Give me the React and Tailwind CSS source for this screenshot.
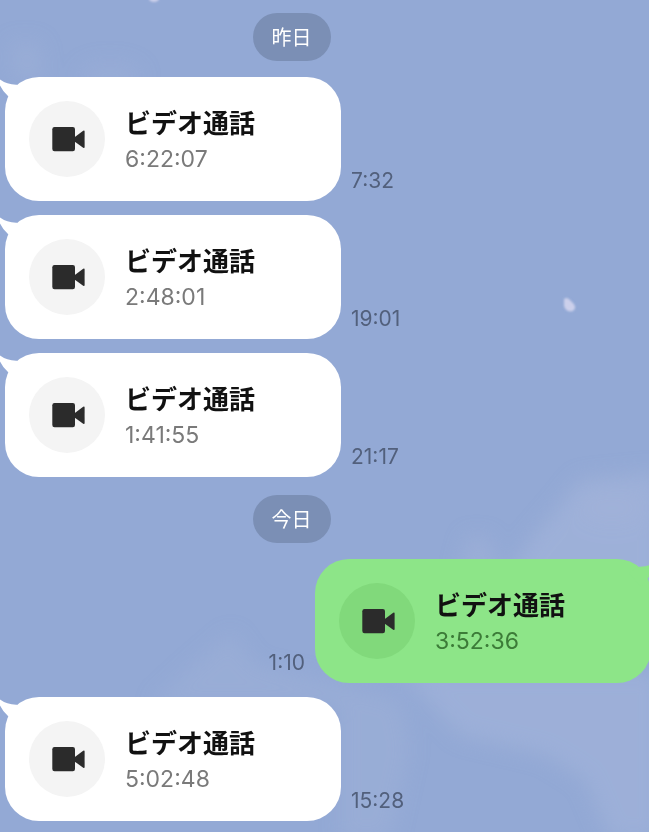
import React from 'react'
import clsx from 'clsx'

const DAYS = [
  {
    label: '昨日',
    calls: [
      { id: 1, duration: '6:22:07', time: '7:32' },
      { id: 2, duration: '2:48:01', time: '19:01' },
      { id: 3, duration: '1:41:55', time: '21:17' },
    ],
  },
  {
    label: '今日',
    calls: [
      { id: 4, duration: '3:52:36', time: '1:10', mine: true },
      { id: 5, duration: '5:02:48', time: '15:28' },
    ],
  },
]

function Wallpaper() {
  return (
    <svg
      className="absolute inset-0 h-full w-full"
      viewBox="0 0 649 832"
      preserveAspectRatio="xMidYMid slice"
      aria-hidden="true"
    >
      <defs>
        <filter id="cloud" x="-20%" y="-20%" width="140%" height="140%">
          <feGaussianBlur stdDeviation="10" />
        </filter>
        <filter id="petal" x="-50%" y="-50%" width="200%" height="200%">
          <feGaussianBlur stdDeviation="1.3" />
        </filter>
      </defs>
      <g fill="#a3b4da" filter="url(#cloud)">
        <path d="M505 580 L530 540 L560 505 L580 480 L660 472 V600 H505z" opacity=".65" />
        <ellipse cx="612" cy="508" rx="34" ry="16" opacity=".5" />
        <path d="M458 575 L468 536 L490 538 L498 575z" opacity=".5" />
        <path d="M150 705 L190 668 L232 632 L255 665 L320 680 L400 700 L410 750 L390 840 H340 V705z" opacity=".35" />
        <path d="M400 672 H660 V840 H610 L585 780 L545 755 L460 735z" opacity=".6" />
        <path d="M10 42 H40 L44 80 H14z" opacity=".35" />
        <ellipse cx="110" cy="76" rx="32" ry="14" opacity=".3" />
      </g>
      <g fill="#ccd0eb" filter="url(#petal)">
        <path d="M564 299 Q567 296 571 301 Q578 307 573 311 Q566 313 564 306z" />
        <ellipse cx="154" cy="-1" rx="5" ry="3" />
      </g>
    </svg>
  )
}

function VideoIcon() {
  return (
    <svg className="h-full w-full" viewBox="0 0 76 76" fill="#2b2b2b" aria-hidden="true">
      <rect x="23.3" y="26" width="22.7" height="24.2" rx="2.2" />
      <path d="M45.5 36.2 L54.2 29.8 Q55.6 29 55.6 30.6 V46 Q55.6 47.6 54.2 46.8 L45.5 40.4z" />
    </svg>
  )
}

function Tail({ mine }) {
  return (
    <svg
      className={clsx(
        'absolute top-0 h-9 w-12',
        mine ? '-right-3 -scale-x-100 text-[#8de588]' : '-left-3 text-white',
      )}
      viewBox="0 0 48 36"
      fill="currentColor"
      aria-hidden="true"
    >
      <path d="M4 0 Q12 8 24 7.7 L34 14 L22 28 L15 19 Q7 12 4 0z" />
    </svg>
  )
}

function CallMessage({ call }) {
  const { mine, duration, time } = call
  return (
    <li className={clsx('flex items-end gap-2.5', mine ? '-mr-0.5 flex-row-reverse' : 'pl-[5px]')}>
      <div
        className={clsx(
          'relative flex h-31 w-84 items-center gap-5 rounded-[34px] px-6',
          mine ? 'bg-[#8de588]' : 'bg-white',
        )}
      >
        <Tail mine={mine} />
        <div className={clsx('size-19 shrink-0 rounded-full', mine ? 'bg-[#81d97b]' : 'bg-[#f4f4f4]')}>
          <VideoIcon />
        </div>
        <div className="pt-1">
          <p className="text-[26px] leading-9 font-bold text-[#111]">ビデオ通話</p>
          <p className={clsx('text-[23px] leading-[34px]', mine ? 'text-[#3c7c38]' : 'text-[#7a7a7a]')}>
            {duration}
          </p>
        </div>
      </div>
      <time className="pb-2 text-[21px] leading-6 text-[#52607c]">{time}</time>
    </li>
  )
}

export default function App() {
  return (
    <main
      lang="ja"
      className="relative min-h-screen overflow-hidden bg-[#93a9d5] font-['Inter','Noto_Sans_CJK_JP',sans-serif]"
    >
      <Wallpaper />
      <div className="relative flex flex-col gap-[18px] pt-[13px] pb-[11px]">
        {DAYS.map(day => (
          <section key={day.label} className="flex flex-col gap-4">
            <div className="flex justify-center pr-[66px]">
              <h2 className="rounded-full bg-[#7b8fb5] px-[19px] pt-[9px] pb-[7px] text-xl leading-8 text-white">
                {day.label}
              </h2>
            </div>
            <ul className="flex flex-col gap-3.5">
              {day.calls.map(call => (
                <CallMessage key={call.id} call={call} />
              ))}
            </ul>
          </section>
        ))}
      </div>
    </main>
  )
}
